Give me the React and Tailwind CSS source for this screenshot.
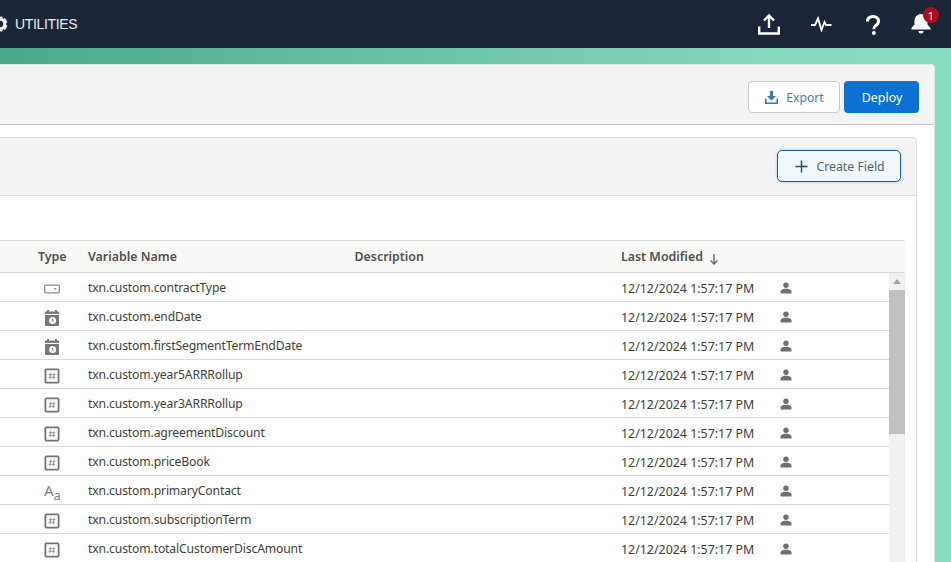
import React from "react";

const rows = [
  ["pick", "txn.custom.contractType"],
  ["date", "txn.custom.endDate"],
  ["date", "txn.custom.firstSegmentTermEndDate"],
  ["num", "txn.custom.year5ARRRollup"],
  ["num", "txn.custom.year3ARRRollup"],
  ["num", "txn.custom.agreementDiscount"],
  ["num", "txn.custom.priceBook"],
  ["text", "txn.custom.primaryContact"],
  ["num", "txn.custom.subscriptionTerm"],
  ["num", "txn.custom.totalCustomerDiscAmount"],
];

function TypeIcon({ kind }) {
  if (kind === "pick")
    return (
      <svg width="16" height="16" viewBox="0 0 16 16" fill="none">
        <rect x="0.7" y="4.200" width="14.600" height="7.600" rx="1" stroke="#8a8a8a" strokeWidth="1.300" />
        <path d="M9.800 7.200h3l-1.500 1.800z" fill="#777" />
      </svg>
    );
  if (kind === "date")
    return (
      <svg width="16" height="16" viewBox="0 0 16 16" fill="#767676">
        <rect x="3" y="0" width="2" height="2.500" />
        <rect x="11" y="0" width="2" height="2.500" />
        <rect x="1" y="1.500" width="14" height="2.400" />
        <path d="M1 5h14v10a1 1 0 0 1-1 1H2a1 1 0 0 1-1-1z" />
        <circle cx="8.600" cy="10.400" r="3.500" fill="#fff" />
        <path d="M8.400 8.400v2.200l1.600 .8" stroke="#767676" strokeWidth="0.9" fill="none" />
      </svg>
    );
  if (kind === "num")
    return (
      <svg width="16" height="16" viewBox="0 0 16 16" fill="none">
        <rect x="1.400" y="1.400" width="13.200" height="13.200" rx="1" stroke="#737373" strokeWidth="1.800" />
        <path d="M6.800 4.800 5.800 11.200M10.200 4.800 9.200 11.200M4.800 6.700h6.600M4.500 9.300h6.600" stroke="#8c8c8c" strokeWidth="0.9" />
      </svg>
    );
  return (
    <span className="flex h-4 w-4 items-end leading-none text-[#7d7d7d]">
      <span className="-translate-y-0.5 text-[15px]">A</span>
      <span className="translate-y-0.5 text-[13px]">a</span>
    </span>
  );
}

function Person() {
  return (
    <svg width="12" height="12" viewBox="0 0 12 12" fill="#6f6f6f">
      <circle cx="6" cy="3.200" r="2.700" />
      <path d="M0.500 11.500V9.600C0.500 8 2.500 7.200 4.200 6.800h3.600c1.700 .4 3.700 1.200 3.700 2.800v1.900z" />
    </svg>
  );
}

function Row({ kind, name }) {
  return (
    <div className="flex h-[29px] shrink-0 items-center border-b border-[#d9d9d9] pt-[2px] text-[#3e3e3c]">
      <div className="flex w-[88px] shrink-0 justify-end pr-[28px]">
        <div className="mt-[1px]">
          <TypeIcon kind={kind} />
        </div>
      </div>
      <div className="w-[533px] shrink-0 text-[12.2px] tracking-[-0.15px]">{name}</div>
      <div className="w-[158.5px] shrink-0 pt-[2px] text-[12.4px]">12/12/2024 1:57:17 PM</div>
      <Person />
    </div>
  );
}

export default function App() {
  return (
    <div className="flex h-[562px] w-[951px] flex-col overflow-hidden bg-gradient-to-r from-[#4aa88b] via-[#84d9bd] via-80% to-[#86dcc0] font-['Noto_Sans',sans-serif]">
      <header className="flex h-[48px] shrink-0 items-center bg-[#1b2538] text-white">
        <div className="flex items-center gap-[7px]">
          <svg width="8" height="16" viewBox="0 -8 8 16" className="shrink-0 overflow-hidden" fill="#eef1f5">
            <path d="M-2.200-7.500h4.400l.7 2.300 2.300-.6 2.200 3.800L5.800 0l1.600 2-2.200 3.800-2.300-.6-.7 2.300h-4.400l-.7-2.300-2.300.6L-7.400 2l1.600-2-1.600-2 2.200-3.800 2.300.6z" />
            <circle r="3.200" fill="#1b2538" />
          </svg>
          <span className="font-['Liberation_Sans',sans-serif] text-[14px] tracking-[-0.35px] text-[#e8edf3]">UTILITIES</span>
        </div>
        <div className="ml-auto flex items-center">
          <div className="flex w-[52px] justify-center">
            <svg width="24" height="24" viewBox="0 0 24 24" fill="none" stroke="#fff" strokeWidth="2.400">
              <path d="M12 16V4M7 8.500l5-5 5 5" />
              <path d="M2.200 14.500v7h19.600v-7" />
            </svg>
          </div>
          <div className="flex w-[52px] justify-center">
            <svg width="22" height="16" viewBox="0 0 22 16" fill="none" stroke="#fff" strokeWidth="1.900">
              <path d="M1 9h4l3-6.500 3.500 11.500 3-8 1.500 3h5.500" />
            </svg>
          </div>
          <div className="flex w-[52px] justify-center pt-[2px]">
            <svg width="14" height="20" viewBox="0 0 14 20" fill="none" stroke="#fff" strokeWidth="3">
              <path d="M1.500 6.500C1.500 3 4 1.500 7 1.500s5.500 1.700 5.500 4.800c0 2.500-1.500 3.500-3 4.500-1.300 .9-1.600 1.600-1.600 3.400" />
              <circle cx="7.900" cy="18" r="2" fill="#fff" stroke="none" />
            </svg>
          </div>
          <div className="relative ml-[12px] mr-[20px] h-[24px] w-[20px]">
            <svg width="20" height="22" viewBox="0 0 20 22" fill="#fff" className="mt-[1px]">
              <path d="M10 1a6.500 6.500 0 0 0-6.500 6.500v4L0.500 15v1.500h19V15l-3-3.500v-4A6.500 6.500 0 0 0 10 1z" />
              <path d="M7.500 18h5a2.500 2.500 0 0 1-5 0z" />
            </svg>
            <span className="absolute left-[12px] top-[-5px] flex h-4 w-4 items-center justify-center rounded-full bg-[#b5091c] text-[11px] leading-none text-white">1</span>
          </div>
        </div>
      </header>

      <div className="h-[16px] shrink-0" />

      <main className="mr-[16px] flex min-h-0 flex-1 flex-col overflow-hidden rounded-tr-[4px] border-r border-t border-[#dfe6e3] bg-white">
        <div className="flex h-[60px] shrink-0 items-start justify-end gap-[4px] border-b border-[#c9c9c9] bg-[#f3f3f3] pr-[15px] pt-[16px]">
          <button className="flex h-[32px] w-[92px] items-center justify-center gap-[7px] rounded-[4px] border border-[#c9c9c9] bg-white text-[12.2px] text-[#44809f]">
            <svg width="15" height="15" viewBox="0 0 15 15" fill="#2f7ea8">
              <path d="M6 1h3v5h3L7.500 10.500 3 6h3z" />
              <path d="M1 8.500h1.500V12.500h10V8.500H14V14H1z" />
            </svg>
            <span className="pt-[2px]">Export</span>
          </button>
          <button className="h-[32px] w-[75px] rounded-[4px] bg-[#0b72d4] pl-[1px] pt-[2px] text-[12.4px] text-white">Deploy</button>
        </div>

        <div className="mr-[17px] mt-[12px] flex min-h-0 flex-1 flex-col overflow-hidden rounded-tr-[4px] border-r border-t border-[#dcdcdc]">
          <div className="flex h-[58px] shrink-0 items-start justify-end border-b border-[#dcdcdc] bg-[#f3f3f3] pr-[15px] pt-[12px]">
            <button className="flex h-[32px] w-[124px] items-center justify-center gap-[8px] rounded-[5px] border-[1.5px] border-[#1c5f8f] bg-[#f1f8fc] pl-[2px] text-[12.3px] text-[#4a6478] shadow-[0_0_3px_#9ccbea]">
              <svg width="13" height="13" viewBox="0 0 13 13" stroke="#1f4f73" strokeWidth="1.500">
                <path d="M6.500 0.500v12M0.500 6.500h12" />
              </svg>
              <span className="pt-[2px]">Create Field</span>
            </button>
          </div>

          <div className="mr-[11px] mt-[44px] flex min-h-0 flex-1 flex-col">
            <div className="flex h-[33px] shrink-0 items-center border-b border-t border-[#d9d9d9] bg-[#f8f8f7] pt-[1px] text-[12.4px] font-semibold text-[#514f4d]">
              <div className="w-[38px] shrink-0" />
              <div className="w-[50px] shrink-0">Type</div>
              <div className="w-[266.500px] shrink-0">Variable Name</div>
              <div className="w-[266.500px] shrink-0">Description</div>
              <div className="flex items-center gap-[6px]">
                Last Modified
                <svg width="10" height="12" viewBox="0 0 10 12" fill="none" stroke="#6a6a6a" strokeWidth="1.400" className="mt-[4px]">
                  <path d="M5 1v10M1.500 7.500 5 11l3.500-3.500" />
                </svg>
              </div>
            </div>
            <div className="flex min-h-0 flex-1 overflow-hidden">
              <div className="min-w-0 flex-1">
                {rows.map(([k, n]) => (
                  <Row key={n} kind={k} name={n} />
                ))}
              </div>
              <div className="flex w-[16px] shrink-0 flex-col bg-[#f1f1f1]">
                <div className="flex h-[17px] shrink-0 items-center justify-center">
                  <svg width="8" height="5" viewBox="0 0 8 5" fill="#a3a3a3">
                    <path d="M4 0 8 5H0z" />
                  </svg>
                </div>
                <div className="h-[144px] shrink-0 bg-[#c1c1c1]" />
              </div>
            </div>
          </div>
        </div>
      </main>
    </div>
  );
}
